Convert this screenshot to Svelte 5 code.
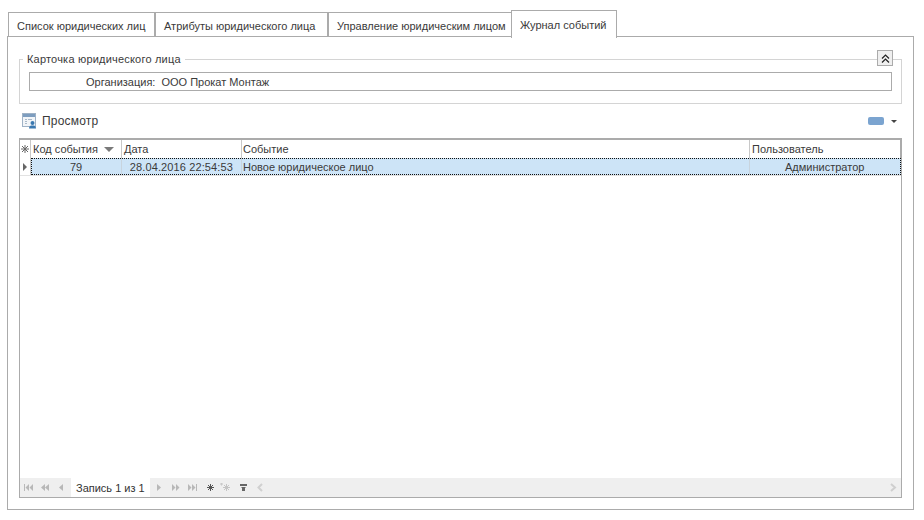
<script>
  const tabs = [
    { label: 'Список юридических лиц', width: 147 },
    { label: 'Атрибуты юридического лица', width: 173 },
    { label: 'Управление юридическим лицом', width: 184 },
    { label: 'Журнал событий', width: 106, active: true }
  ];

  const columns = [
    { label: 'Код события', width: 91, value: '79', cls: 'code', sort: true },
    { label: 'Дата', width: 120, value: '28.04.2016 22:54:53', cls: 'date' },
    { label: 'Событие', width: 508, value: 'Новое юридическое лицо', cls: 'event' },
    { label: 'Пользователь', width: 149, value: 'Администратор', cls: 'user' }
  ];
</script>

<div class="page">
  <div class="tabs">
    {#each tabs as tab}
      <div class="tab" class:active={tab.active} style="width: {tab.width}px">{tab.label}</div>
    {/each}
  </div>

  <div class="panel">
    <fieldset class="card">
      <legend>Карточка юридического лица</legend>
      <button class="collapse" type="button" aria-label="Свернуть">
        <svg width="9" height="9" viewBox="0 0 9 9" fill="none" stroke="#222" stroke-width="1.200">
          <path d="M1 4.500 4.500 1 8 4.500M1 8.500 4.500 5 8 8.500" />
        </svg>
      </button>
      <div class="org">
        <span class="org-label">Организация:</span>
        <span>ООО Прокат Монтаж</span>
      </div>
    </fieldset>

    <div class="toolbar">
      <svg class="view-icon" width="15" height="16" viewBox="0 0 15 16">
        <rect x="0.500" y="0.500" width="13" height="13" fill="#f2f5f8" stroke="#9fb2c6" />
        <rect x="1" y="1" width="12" height="3" fill="#7d9dbf" />
        <path d="M3 6.500h2M3 8.500h2M3 10.500h2M6 6.500h4" stroke="#a9b9c9" fill="none" />
        <circle cx="10.500" cy="10" r="2" fill="#3b79b0" />
        <path d="M7 15.500c0-2.500 1.500-3 3.500-3s3.500.5 3.500 3z" fill="#3b79b0" />
      </svg>
      <span class="view-text">Просмотр</span>
      <span class="spacer"></span>
      <span class="swatch"></span>
      <span class="caret"></span>
    </div>

    <div class="grid">
      <div class="head">
        <div class="indicator">
          <svg width="8" height="8" viewBox="0 0 8 8" stroke="#666" stroke-width="1" fill="none">
            <path d="M4 0v8M0 4h8M1 1l6 6M7 1 1 7" />
          </svg>
        </div>
        {#each columns as col}
          <div class="hcell {col.cls}" style="width: {col.width}px">
            <span>{col.label}</span>
            {#if col.sort}<span class="sort"></span>{/if}
          </div>
        {/each}
      </div>

      <div class="row">
        <div class="indicator"><span class="pointer"></span></div>
        <div class="cells">
          {#each columns as col}
            <div class="cell {col.cls}" style="width: {col.width}px">{col.value}</div>
          {/each}
        </div>
      </div>

      <div class="empty"></div>

      <div class="nav">
        <svg class="nav-left" width="51" height="9" viewBox="0 0 51 9" fill="#b8b8b8">
          <path d="M4 1h1v7H4zM9 1v7L5.500 4.500zM13 1v7L9.500 4.500z" />
          <path d="M25 1v7l-4-3.500zM29 1v7l-4-3.500z" />
          <path d="M43 1v7l-4-3.500z" />
        </svg>
        <span class="nav-text">Запись 1 из 1</span>
        <svg class="nav-right" width="116" height="9" viewBox="0 0 116 9" fill="#b8b8b8">
          <path d="M7 1v7l4-3.500z" />
          <path d="M22 1v7l3.500-3.500zM26 1v7l3.500-3.500z" />
          <path d="M38 1v7l3.500-3.500zM42 1v7l3.500-3.500zM46 1h1v7h-1z" />
          <path d="M60.500 1v7M57 4.500h7M58 2l5 5M63 2l-5 5" stroke="#555" fill="none" />
          <path d="M71 0h1v2h-1zM76.500 1v7M73 4.500h7M74 2l5 5M79 2l-5 5" stroke="#c4c4c4" fill="none" />
          <path d="M90 1h7v2h-7zM91 4h5l-1 1v3h-3V5z" fill="#666" />
          <path d="M112 1 108.500 4.500 112 8" stroke="#d0d0d0" stroke-width="2" fill="none" />
        </svg>
        <span class="spacer"></span>
        <svg class="scroll-arrow" width="7" height="9" viewBox="0 0 7 9" fill="none" stroke="#cfcfcf" stroke-width="2">
          <path d="M1 1 5 4.500 1 8" />
        </svg>
      </div>
    </div>
  </div>
</div>

<style>
  :global(body) {
    margin: 0;
    background: #fff;
  }

  .page {
    width: 924px;
    height: 520px;
    box-sizing: border-box;
    padding: 10px 10px 9px 7px;
    font-family: 'Liberation Sans', Arial, sans-serif;
    font-size: 11px;
    color: #3a3a3a;
    overflow: hidden;
  }

  .tabs {
    display: flex;
    height: 26px;
    padding-left: 1px;
    position: relative;
    z-index: 1;
  }

  .tab {
    box-sizing: border-box;
    height: 24px;
    margin-top: 2px;
    border: 1px solid #ababab;
    border-bottom: 0;
    padding-left: 8px;
    line-height: 27px;
    white-space: nowrap;
    background: #fff;
  }

  .tab.active {
    height: 28px;
    margin-top: 0;
    margin-left: -1px;
    line-height: 28px;
  }

  .panel {
    box-sizing: border-box;
    height: 474px;
    border: 1px solid #ababab;
    padding: 14px 11px 11px 11px;
    display: flex;
    flex-direction: column;
  }

  .card {
    position: relative;
    margin: 0;
    box-sizing: border-box;
    height: 53px;
    flex: none;
    padding: 0 9px;
    border: 1px solid #d4d4d4;
    min-inline-size: 0;
  }

  legend {
    margin-left: -6px;
    padding: 0 4px;
    line-height: 16px;
    letter-spacing: 0.2px;
  }

  .collapse {
    position: absolute;
    top: -17px;
    right: 8px;
    width: 16px;
    height: 16px;
    padding: 0;
    display: flex;
    align-items: center;
    justify-content: center;
    background: #efefef;
    border: 1px solid #ababab;
  }

  .org {
    box-sizing: border-box;
    height: 19px;
    margin-top: 5px;
    border: 1px solid #ababab;
    display: flex;
    gap: 6px;
    align-items: center;
    padding-left: 56px;
  }

  .toolbar {
    height: 34px;
    flex: none;
    display: flex;
    align-items: center;
    padding: 0 5px 0 3px;
  }

  .view-text {
    margin-left: 5px;
    font-size: 12px;
    letter-spacing: 0.2px;
  }

  .spacer {
    flex: 1;
  }

  .swatch {
    width: 16px;
    height: 8px;
    border-radius: 2px;
    background: #7ba4d0;
  }

  .caret {
    margin-left: 7px;
    border: 3px solid transparent;
    border-top: 3px solid #444;
    border-bottom: 0;
    width: 0;
    height: 0;
  }

  .grid {
    flex: 1;
    min-height: 0;
    border: 1px solid #ababab;
    display: flex;
    flex-direction: column;
  }

  .head {
    display: flex;
    height: 19px;
    flex: none;
    box-sizing: border-box;
    border-top: 1px solid #ababab;
    border-right: 1px solid #ababab;
  }

  .indicator {
    box-sizing: border-box;
    width: 11px;
    flex: none;
    border-right: 1px solid #c8c8c8;
    display: flex;
    align-items: center;
    justify-content: center;
  }

  .hcell {
    box-sizing: border-box;
    border-right: 1px solid #c8c8c8;
    padding-left: 2px;
    line-height: 17px;
    display: flex;
    align-items: center;
    white-space: nowrap;
  }

  .hcell:last-child {
    border-right: 0;
  }

  .sort {
    margin-left: 6px;
    border: 5px solid transparent;
    border-top: 5px solid #7a7a7a;
    border-bottom: 0;
  }

  .row {
    display: flex;
    height: 18px;
    flex: none;
    box-sizing: border-box;
    border-bottom: 1px solid #e2e2e2;
  }

  .pointer {
    border: 4px solid transparent;
    border-left: 4px solid #666;
    border-right: 0;
  }

  .cells {
    flex: 1;
    display: flex;
    background: #cde4f7;
    outline: 1px dotted #111;
    outline-offset: -1px;
  }

  .cell {
    box-sizing: border-box;
    border-right: 1px solid #c8d4de;
    padding-left: 2px;
    line-height: 19px;
    white-space: nowrap;
  }

  .cell:last-child {
    border-right: 0;
    flex: 1;
  }

  .cell.code {
    text-align: center;
    padding-left: 0;
  }

  .cell.date {
    text-align: right;
    padding-right: 8px;
    letter-spacing: 0.12px;
  }

  .cell.event,
  .hcell.event {
    padding-left: 1px;
  }

  .cell.user {
    padding-left: 35px;
  }

  .empty {
    flex: 1;
  }

  .nav {
    height: 19px;
    flex: none;
    background: #efefef;
    display: flex;
    align-items: center;
    padding-right: 4px;
  }

  .nav-text {
    box-sizing: border-box;
    width: 79px;
    height: 100%;
    line-height: 20px;
    padding-left: 5px;
    background: #fff;
    color: #333;
    white-space: nowrap;
  }

  .nav-left,
  .nav-right,
  .scroll-arrow {
    flex: none;
  }
</style>
